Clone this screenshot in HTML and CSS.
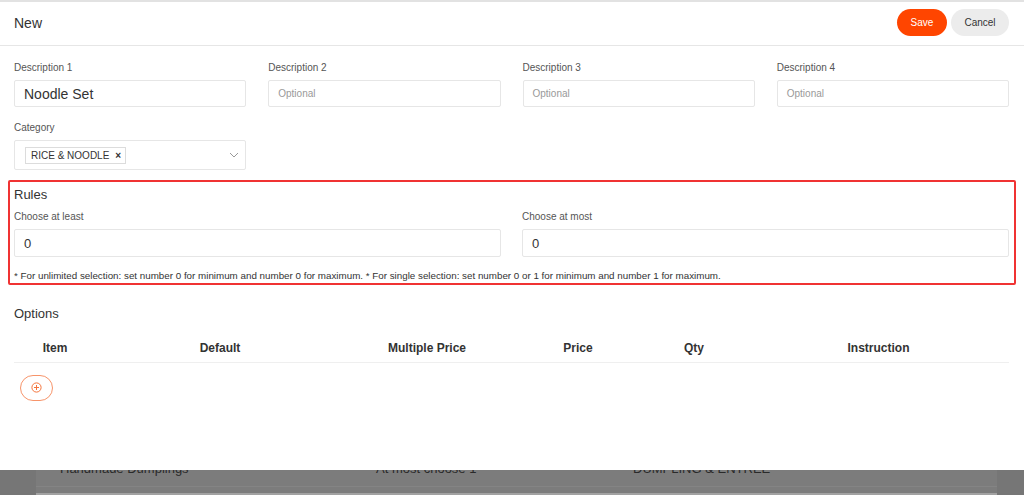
FILE: index.html
```html
<!DOCTYPE html>
<html>
<head>
<meta charset="utf-8">
<link rel="stylesheet" href="styles.css">
</head>
<body>
<div class="page">
  <div class="page-card">
    <div class="page-row">
      <span class="c1">Handmade Dumplings</span>
      <span class="c2">At most choose 1</span>
      <span class="c3">DUMPLING &amp; ENTREE</span>
    </div>
  </div>
</div>

<div class="modal">
  <div class="modal-header">
    <div class="title">New</div>
    <div class="actions">
      <button class="btn btn-save">Save</button>
      <button class="btn btn-cancel">Cancel</button>
    </div>
  </div>
  <div class="modal-body">
    <div class="grid4">
      <div class="field">
        <label class="label">Description 1</label>
        <div class="input filled">Noodle Set</div>
      </div>
      <div class="field">
        <label class="label">Description 2</label>
        <div class="input placeholder">Optional</div>
      </div>
      <div class="field">
        <label class="label">Description 3</label>
        <div class="input placeholder">Optional</div>
      </div>
      <div class="field">
        <label class="label">Description 4</label>
        <div class="input placeholder">Optional</div>
      </div>
    </div>
    <div class="grid4 cat-row">
      <div class="field">
        <label class="label">Category</label>
        <div class="select">
          <span class="tag">RICE &amp; NOODLE <span class="tag-x">×</span></span>
          <svg class="chev" width="10" height="6" viewBox="0 0 10 6"><path d="M1 1 L5 5 L9 1" fill="none" stroke="#999" stroke-width="1"/></svg>
        </div>
      </div>
    </div>

    <div class="rules">
      <div class="section-title">Rules</div>
      <div class="grid2">
        <div class="field">
          <label class="label">Choose at least</label>
          <div class="input filled num">0</div>
        </div>
        <div class="field">
          <label class="label">Choose at most</label>
          <div class="input filled num">0</div>
        </div>
      </div>
      <div class="hint">* For unlimited selection: set number 0 for minimum and number 0 for maximum. * For single selection: set number 0 or 1 for minimum and number 1 for maximum.</div>
    </div>

    <div class="options">
      <div class="section-title opt-title">Options</div>
      <table class="opt-table">
        <thead>
          <tr>
            <th class="w-item">Item</th>
            <th class="w-default">Default</th>
            <th class="w-multi">Multiple Price</th>
            <th class="w-price">Price</th>
            <th class="w-qty">Qty</th>
            <th class="w-instr">Instruction</th>
          </tr>
        </thead>
      </table>
      <button class="add-btn">
        <svg width="11" height="11" viewBox="0 0 11 11"><circle cx="5.5" cy="5.5" r="4.6" fill="none" stroke="#f4743b" stroke-width="1"/><path d="M5.5 3 V8 M3 5.5 H8" stroke="#f4743b" stroke-width="1"/></svg>
      </button>
    </div>
  </div>
</div>
</body>
</html>
```

FILE: styles.css
```css
* { box-sizing: border-box; }
html, body { margin: 0; padding: 0; }
body {
  width: 1024px;
  height: 495px;
  overflow: hidden;
  background: #767676;
  font-family: "Liberation Sans", Arial, sans-serif;
  position: relative;
}

/* background page under overlay */
.page {
  padding-top: 455px;
  height: 495px;
}
.page-card {
  margin: 0 27px 0 36px;
  background: #7c7c7c;
  height: 40px;
  border-bottom: 2px solid #a2a2a2;
}
.page-row {
  display: flex;
  height: 32px;
  align-items: flex-start;
  padding-top: 6px;
  border-bottom: 1px solid #848484;
  font-size: 13px;
  line-height: 15px;
  color: #2a2a2a;
}
.c1 { margin-left: 24px; width: 316px; }
.c2 { width: 257px; }

/* modal */
.modal {
  position: absolute;
  left: 0;
  top: 0;
  width: 1024px;
  height: 470px;
  background: #fff;
  border-top: 2px solid #e2e2e2;
}
.modal-header {
  height: 44px;
  border-bottom: 1px solid #e6e6e6;
  display: flex;
  align-items: center;
  justify-content: space-between;
  padding: 0 15px 0 14px;
}
.title {
  font-size: 14px;
  color: #333;
  margin-top: -2px;
}
.actions { display: flex; gap: 4px; margin-top: -3px; }
.btn {
  border: none;
  height: 27px;
  border-radius: 14px;
  font-family: inherit;
  font-size: 10px;
  padding: 0;
}
.btn-save { width: 50px; background: #ff4500; color: #fff; }
.btn-cancel { width: 58px; background: #ececec; color: #333; }

.modal-body {
  padding: 15px 15px 0 14px;
}
.grid4 {
  display: grid;
  grid-template-columns: repeat(4, 1fr);
  column-gap: 22px;
}
.field { display: flex; flex-direction: column; }
.label {
  font-size: 10px;
  line-height: 14px;
  color: #555;
  margin-bottom: 5px;
}
.input {
  height: 27px;
  border: 1px solid #e6e6e6;
  border-radius: 2px;
  display: flex;
  align-items: center;
  padding-left: 9px;
}
.input.filled { font-size: 14px; color: #333; }
.input.placeholder { font-size: 10px; color: #999; padding-left: 9px; }
.input.num { height: 28px; font-size: 13px; }

.cat-row { margin-top: 14px; }
.select {
  height: 30px;
  border: 1px solid #e6e6e6;
  border-radius: 2px;
  display: flex;
  align-items: center;
  justify-content: space-between;
  padding: 0 6px 0 10px;
}
.tag {
  font-size: 10px;
  color: #333;
  border: 1px solid #dcdcdc;
  padding: 2px 4px 2px 5px;
  line-height: 11px;
  display: inline-flex;
  align-items: center;
}
.tag-x { font-size: 10px; font-weight: bold; margin-left: 6px; }

.rules {
  margin: 10px -7px 0 -6px;
  border: 2px solid #f03333;
  border-radius: 2px;
  padding: 5px 5px 1px 4px;
}
.section-title {
  font-size: 13px;
  color: #333;
  line-height: 16px;
}
.rules .section-title { margin-bottom: 7px; }
.grid2 {
  display: grid;
  grid-template-columns: 1fr 1fr;
  column-gap: 21px;
}
.hint {
  margin-top: 13px;
  font-size: 9.8px;
  color: #333;
  line-height: 12px;
}

.options { margin-top: 21px; }
.opt-title { margin-bottom: 12px; }
.opt-table {
  width: 100%;
  border-collapse: collapse;
}
.opt-table th {
  font-size: 12px;
  font-weight: bold;
  color: #333;
  text-align: center;
  height: 28px;
  padding: 0;
  border-bottom: 1px solid #efefef;
  vertical-align: middle;
}
.w-item { width: 96px; }
.opt-table th.w-item { padding-right: 14px; }
.w-default { width: 220px; }
.w-multi { width: 194px; }
.w-price { width: 108px; }
.w-qty { width: 124px; }
.opt-table th.w-instr { padding-right: 8px; }

.add-btn {
  margin: 12px 0 0 6px;
  width: 33px;
  height: 26px;
  border: 1px solid #f7946a;
  border-radius: 13px;
  background: #fff;
  display: flex;
  align-items: center;
  justify-content: center;
  padding: 0;
}
```
